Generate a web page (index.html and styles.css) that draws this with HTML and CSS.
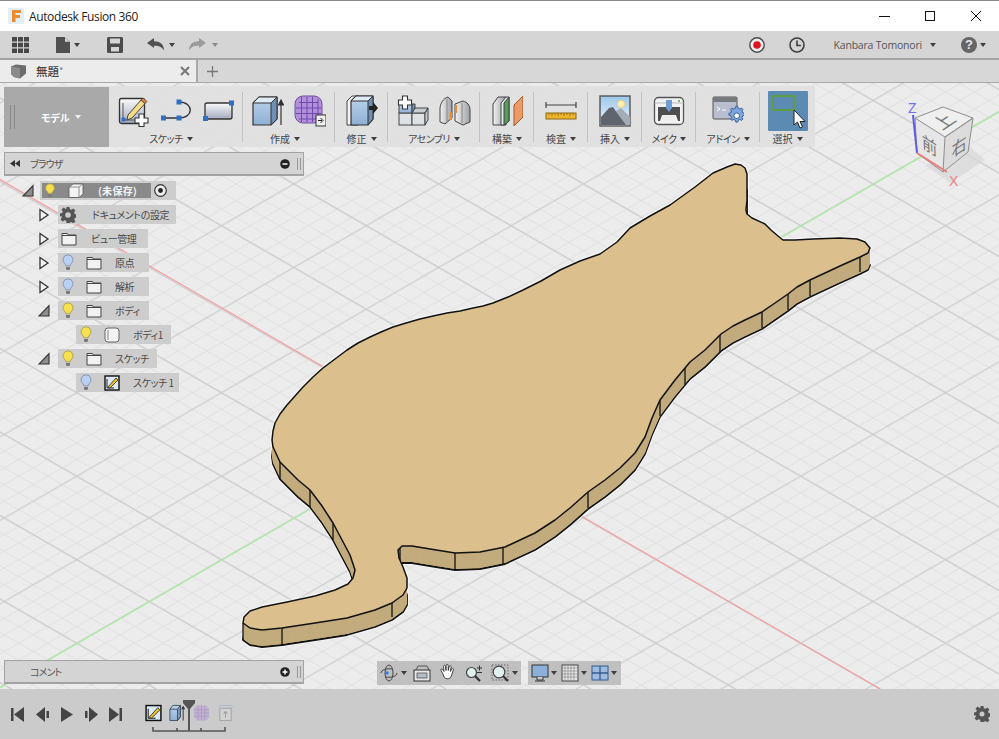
FILE: index.html
```html
<!DOCTYPE html>
<html lang="ja">
<head>
<meta charset="utf-8">
<title>Autodesk Fusion 360</title>
<link rel="stylesheet" href="styles.css">
</head>
<body>
<svg class="defs" aria-hidden="true">
  <defs>
    <linearGradient id="gBlue" x1="0" y1="0" x2="0" y2="1"><stop offset="0" stop-color="#bcd3ea"/><stop offset="1" stop-color="#8fb0d4"/></linearGradient>
    <linearGradient id="gSilver" x1="0" y1="0" x2="0" y2="1"><stop offset="0" stop-color="#fafafa"/><stop offset="1" stop-color="#a4abc0"/></linearGradient>
    <linearGradient id="gGrey" x1="0" y1="0" x2="1" y2="0"><stop offset="0" stop-color="#f2f2f2"/><stop offset="1" stop-color="#9c9fa6"/></linearGradient>
    <linearGradient id="gSky" x1="0" y1="0" x2="0" y2="1"><stop offset="0" stop-color="#9cc6ea"/><stop offset="1" stop-color="#eef6fb"/></linearGradient>
    <symbol id="bulbY" viewBox="0 0 12 17"><path d="M6 .8a5 5 0 0 1 3 9c-.6.5-.8 1.200-.8 2H3.800c0-.8-.2-1.500-.8-2a5 5 0 0 1 3-9z" fill="#f6e04e" stroke="#a89b58" stroke-width=".9"/><path d="M4 13h4v2.200L6.800 16H5.200L4 15.200z" fill="#777"/></symbol>
    <symbol id="bulbB" viewBox="0 0 12 17"><path d="M6 .8a5 5 0 0 1 3 9c-.6.5-.8 1.200-.8 2H3.800c0-.8-.2-1.500-.8-2a5 5 0 0 1 3-9z" fill="#b9d0f2" stroke="#7f8fae" stroke-width=".9"/><path d="M4 13h4v2.200L6.800 16H5.200L4 15.200z" fill="#777"/></symbol>
    <symbol id="folder" viewBox="0 0 16 14"><path d="M1 1.500h5.500l1 1.500H15v10H1z" fill="#f1f1f1" stroke="#444" stroke-width="1"/><path d="M1 3.500h14" stroke="#444" stroke-width="1"/></symbol>
    <symbol id="expC" viewBox="0 0 12 14"><path d="M2 1.500 10 7 2 12.500z" fill="#f2f2f2" stroke="#333" stroke-width="1.300"/></symbol>
    <symbol id="expO" viewBox="0 0 12 14"><path d="M11 1.500V12H1z" fill="#8e8e8e" stroke="#333" stroke-width="1.100"/></symbol>
    <symbol id="sk" viewBox="0 0 16 16"><rect x="1" y="1" width="14" height="14" fill="#dceaf6" stroke="#111" stroke-width="1.400"/><path d="M3 4V13H10" stroke="#222" stroke-width="1" fill="none"/><path d="M4 12 12 3l2 2-8 8z" fill="#f3c522" stroke="#222" stroke-width=".8"/></symbol>
  </defs>
</svg>

<div class="app">
  <header class="titlebar">
    <svg class="logo" viewBox="0 0 16 16"><rect width="16" height="16" fill="#e3eef6"/><path d="M4 2h9v3H7.500v2H12v3H7.500v4H4z" fill="#ee8b2d"/></svg>
    <span class="title">Autodesk Fusion 360</span>
    <div class="winctl">
      <svg viewBox="0 0 12 12"><path d="M1 6.500h11" stroke="#111" stroke-width="1"/></svg>
      <svg viewBox="0 0 12 12"><rect x="1.500" y="1.500" width="9" height="9" fill="none" stroke="#111"/></svg>
      <svg viewBox="0 0 12 12"><path d="M1 1l10 10M11 1 1 11" stroke="#111" stroke-width="1"/></svg>
    </div>
  </header>

  <div class="toolbar">
    <svg class="tb grid9" viewBox="0 0 17 16"><path d="M0 0h5v4.500H0zM6 0h5v4.500H6zM12 0h5v4.500h-5zM0 5.700h5v4.500H0zM6 5.700h5v4.500H6zM12 5.700h5v4.500h-5zM0 11.500h5V16H0zM6 11.500h5V16H6zM12 11.500h5V16h-5z" fill="#484848"/></svg>
    <svg class="tb doc" viewBox="0 0 14 16"><path d="M0 0h8.500L14 5v11H0z" fill="#505050"/><path d="M9 .5v4.300h4.500" fill="#d4d4d4"/></svg>
    <i class="caret c-doc"></i>
    <svg class="tb save" viewBox="0 0 16 16"><path d="M0 1.500A1.500 1.500 0 0 1 1.500 0h13A1.500 1.500 0 0 1 16 1.500v13a1.500 1.500 0 0 1-1.500 1.500h-13A1.500 1.500 0 0 1 0 14.500z" fill="#4c4c4c"/><rect x="3" y="1.500" width="10" height="5" fill="#d4d4d4"/><rect x="4" y="10" width="8" height="4.500" fill="#d4d4d4"/></svg>
    <svg class="tb undo" viewBox="0 0 17 13"><path d="M0 5 7 0v3.200c6 0 10 3 10 9.300-2-3.500-5-4.700-10-4.700V10z" fill="#505050"/></svg>
    <i class="caret c-undo"></i>
    <svg class="tb redo" viewBox="0 0 17 13"><path d="M17 5 10 0v3.200C4 3.200 0 6.200 0 12.500c2-3.500 5-4.700 10-4.700V10z" fill="#9b9b9b"/></svg>
    <i class="caret c-redo"></i>
    <div class="tb-right">
      <svg class="tb rec" viewBox="0 0 16 16"><circle cx="8" cy="8" r="7.200" fill="#eee" stroke="#4a4a4a" stroke-width="1.400"/><circle cx="8" cy="8" r="3.800" fill="#e01523"/></svg>
      <svg class="tb clock" viewBox="0 0 16 16"><circle cx="8" cy="8" r="7" fill="none" stroke="#3d3d3d" stroke-width="1.600"/><path d="M8 3.500V8.500H12" fill="none" stroke="#3d3d3d" stroke-width="1.600"/></svg>
      <span class="user">Kanbara Tomonori</span>
      <i class="caret c-user"></i>
      <span class="help">?</span>
      <i class="caret c-help"></i>
    </div>
  </div>

  <div class="tabbar">
    <div class="tab">
      <svg class="tabcube" viewBox="0 0 17 15"><path d="M1 2.500 6 .5l10 1v8l-6 5-6-1.500L1 10z" fill="#6c6c6c"/><path d="M1 2.500 10 4v10.500L4 13 1 10z" fill="#8b8b8b"/></svg>
      <span class="tabname">無題<em>*</em></span>
      <svg class="tabx" viewBox="0 0 10 10"><path d="M1 1l8 8M9 1 1 9" stroke="#7b7b7b" stroke-width="2.200"/></svg>
    </div>
    <svg class="tabplus" viewBox="0 0 11 11"><path d="M5.500 0v11M0 5.500h11" stroke="#777" stroke-width="1.300"/></svg>
  </div>

  <main class="canvas">
    <svg class="scene" viewBox="0 83 999 606" preserveAspectRatio="none">
      <defs>
        <pattern id="floor" width="100" height="100" patternUnits="userSpaceOnUse" patternTransform="matrix(.724 .4175 .724 -.4175 800.700 392.700)">
          <rect width="100" height="100" fill="#ececec"/>
          <path d="M20 0V100M40 0V100M60 0V100M80 0V100M0 20H100M0 40H100M0 60H100M0 80H100" stroke="#e0e0e0" stroke-width="1.200"/>
          <path d="M0 0V100M100 0V100M0 0H100M0 100H100" stroke="#cbcbcb" stroke-width="1.500"/>
        </pattern>
        <polygon id="cat" points="735,164 741,165 745,168 747,174 747,184 747,200 746,210 747,214 752,218 765,224 771,230 778,236 783,240 795,240 813,239 840,238 857,239 865,242 870,248 868,253 860,257 840,266 810,280 797,287 788,294 775,303 762,312 745,320 733,326 721,334 705,350 690,362 675,380 660,400 652,418 645,437 635,453 620,468 605,480 588,492 570,508 555,520 535,533 505,547 480,552 455,553 430,549 412,546 402,546 398,550 399,558 403,567 407,578 407,588 403,595 392,603 375,610 347,618 315,623 282,628 262,630 250,628 243,623 244,617 250,611 262,607 287,602 315,596 335,590 348,584 353,578 355,570 350,555 333,523 322,506 310,490 298,480 290,472 280,462 273,447 272,440 273,431 275,423 280,414 287,405 295,396 303,387 313,377 323,368 335,359 347,350 358,343 370,337 381,332 393,327 406,323 420,319 433,316 447,313 460,311 473,308 483,306 493,303 508,297 523,290 541,281 560,270 580,261 600,254 617,242 630,228 650,216 670,205 695,187 713,173 720,170 727,167"/>
      </defs>
      <rect x="0" y="83" width="999" height="606" fill="url(#floor)"/>
      <path d="M0 179.500 880 689" stroke="#f79a9a" stroke-width="1.100"/>
      <path d="M0 688 999 112" stroke="#a3ee9b" stroke-width="1.100"/>

      <use href="#cat" y="17" class="halo"/>
      <use href="#cat" class="halo"/>
      <use href="#cat" y="17" class="cat-bottom"/>
      <use href="#cat" y="16" class="cat-side"/><use href="#cat" y="15" class="cat-side"/><use href="#cat" y="14" class="cat-side"/><use href="#cat" y="13" class="cat-side"/><use href="#cat" y="12" class="cat-side"/><use href="#cat" y="11" class="cat-side"/><use href="#cat" y="10" class="cat-side"/><use href="#cat" y="9" class="cat-side"/><use href="#cat" y="8" class="cat-side"/><use href="#cat" y="7" class="cat-side"/><use href="#cat" y="6" class="cat-side"/><use href="#cat" y="5" class="cat-side"/><use href="#cat" y="4" class="cat-side"/><use href="#cat" y="3" class="cat-side"/><use href="#cat" y="2" class="cat-side"/><use href="#cat" y="1" class="cat-side"/>
      <path class="cat-edges" d="M280 462v17M310 490v17M333 523v17M355 570v11M400 547v14M455 553v17M503 547v18M282 628v18M392 603v14M243 623v17M588 492v16M660 400v16M685 368v17M720 334v18M762 312v16M788 294v16M810 280v16M860 257v15"/>
      <use href="#cat" class="cat-top"/>

      <g class="cube">
        <polygon points="925,165 950,183 985,160 968,145" fill="#d8d8d8" opacity=".7"/>
        <polygon points="915,118 943,107 973,118 945,137" fill="#efefef"/>
        <polygon points="915,118 945,137 943,172 917,153" fill="#e6e6e6"/>
        <polygon points="945,137 973,118 968,152 943,172" fill="#dcdcdc"/>
        <path d="M915 118 943 107 973 118 945 137ZM945 137 943 172 917 153 915 118M945 137 973 118 968 152 943 172" fill="none" stroke="#8f8f8f" stroke-width="1"/>
        <path d="M913 115 917 153" stroke="#5c5ce6" stroke-width="2"/>
        <path d="M917 153 947 172" stroke="#ea7c7c" stroke-width="2"/>
        <text x="908" y="113" class="axis az">Z</text>
        <text x="949" y="186" class="axis ax">X</text>
        <text class="cube-t" transform="matrix(.96 -.65 1.03 .65 949.700 125.600)">上</text>
        <text class="cube-t" transform="matrix(.95 .6 .05 1.100 929.800 152)">前</text>
        <text class="cube-t" transform="matrix(.95 -.63 0 1.100 959 153)">右</text>
      </g>
    </svg>

    <section class="ribbon">
      <div class="mode">
        <span class="grip"></span>
        <span class="mode-l">モデル</span>
        <i class="caret caret-w"></i>
      </div>

      <div class="group g-sketch">
        <div class="icons">
          <svg class="ic" viewBox="0 0 32 32"><rect x="1.500" y="3.500" width="25" height="25" rx="2" fill="url(#gSilver)" stroke="#333" stroke-width="1.300"/><path d="M5 8v17h17" fill="none" stroke="#555"/><rect x="3.500" y="22.500" width="4" height="4" fill="#2f6fc5"/><path d="M10 20 23 5l4 3.500L14 23l-5 2z" fill="#f5dc86" stroke="#444" stroke-width="1"/><path d="M23 5l2-2 4 3.500-2 2z" fill="#e8853c" stroke="#444" stroke-width=".8"/><path d="M21 19h5v4h4v5h-4v3.500h-5V28h-4v-5h4z" fill="#fff" stroke="#333" stroke-width="1.100"/></svg>
          <svg class="ic" viewBox="0 0 32 32"><path d="M3 23H19C34 23 34 7 19 7" fill="none" stroke="#333" stroke-width="1.400"/><rect x="1" y="20.500" width="5" height="5" fill="#2f6fc5"/><rect x="16.500" y="20.500" width="5" height="5" fill="#2f6fc5"/><rect x="16.500" y="4.500" width="5" height="5" fill="#2f6fc5"/></svg>
          <svg class="ic" viewBox="0 0 32 32"><rect x="3" y="8" width="27" height="16" rx="2" fill="url(#gSilver)" stroke="#333" stroke-width="1.300"/><rect x="27" y="5.500" width="5" height="5" fill="#2f6fc5"/><rect x="1" y="21" width="5" height="5" fill="#2f6fc5"/></svg>
        </div>
        <div class="glabel"><span class="kn">スケッチ</span><i class="caret"></i></div>
      </div>

      <div class="group g-create">
        <div class="icons">
          <svg class="ic" viewBox="0 0 32 32"><path d="M1 8 7 2h18v22l-6 6H1z" fill="url(#gBlue)" stroke="#333" stroke-width="1.200"/><path d="M1 8 7 2h18l-6 6z" fill="#dfeaf5" stroke="#333"/><path d="M19 8v22l6-6V2z" fill="#6f8fb5" stroke="#333"/><path d="M29 30V7M26.500 10 29 5l2.500 5z" fill="#333" stroke="#333" stroke-width="1.200"/></svg>
          <svg class="ic" viewBox="0 0 32 32"><rect x="1" y="1" width="27" height="27" rx="8" fill="#b48fdc" stroke="#6d5199" stroke-width="1"/><path d="M5 7.500H24M2 13H27M2 18.500H27M5 24H24M7.500 2V27M13 2V27M18.500 2V27M24 4V26" stroke="#6d4bab" stroke-width="1"/><rect x="22" y="20" width="10" height="11" fill="#eee" stroke="#333"/><path d="M24 25.500h4M26.500 23l2.500 2.500-2.500 2.500" stroke="#222" fill="none"/></svg>
        </div>
        <div class="glabel"><span>作成</span><i class="caret"></i></div>
      </div>

      <div class="group g-modify">
        <div class="icons">
          <svg class="ic" viewBox="0 0 32 32"><path d="M1 6 6 1h6v29H1z" fill="#f4f4f4" stroke="#444"/><path d="M5 6 10 1h17v23l-5 6H5z" fill="url(#gBlue)" stroke="#333" stroke-width="1.200"/><path d="M5 6 10 1h17l-5 5z" fill="#dfeaf5" stroke="#333"/><path d="M22 6v24l5-6V1z" fill="#6f8fb5" stroke="#333"/><path d="M23 11h4V7l5 6-5 6v-4h-4z" fill="#222"/></svg>
        </div>
        <div class="glabel"><span>修正</span><i class="caret"></i></div>
      </div>

      <div class="group g-assembly">
        <div class="icons">
          <svg class="ic" viewBox="0 0 32 32"><rect x="2" y="18" width="13" height="12" fill="#dfe2e5" stroke="#444"/><rect x="15" y="18" width="13" height="12" fill="#dfe2e5" stroke="#444"/><path d="M15 18l3-5h13l-3 5zM28 18l3-5v12l-3 5z" fill="#c9ccd0" stroke="#444"/><path d="M2 9h13v9H2z" fill="url(#gBlue)" stroke="#444"/><path d="M15 9h3v4l-3 5z" fill="#6f8fb5" stroke="#444"/><path d="M5.500 1h5v4h4v5h-4v4h-5v-4h-4V5h4z" fill="#fff" stroke="#333" stroke-width="1.100"/></svg>
          <svg class="ic" viewBox="0 0 32 32"><path d="M1 27V14C1 8 5 3 9 2l4 4v17l-7 6z" fill="url(#gGrey)" stroke="#444"/><path d="M31 27V15c0-5-3-8-7-9l-8 3v17l8 4z" fill="url(#gGrey)" stroke="#444"/><path d="M8 4v23M23 8v20" stroke="#888"/><path d="M12 17v8M17 10v8" stroke="#ee8a2e" stroke-width="2"/></svg>
        </div>
        <div class="glabel"><span class="kn">アセンブリ</span><i class="caret"></i></div>
      </div>

      <div class="group g-construct">
        <div class="icons">
          <svg class="ic" viewBox="0 0 32 32"><path d="M2 9 7 2h8v28H2z" fill="url(#gGrey)" stroke="#444"/><path d="M10 8l5-6h3v24l-5 4h-3z" fill="#e9e9e9" stroke="#444"/><path d="M13 8l5-6v24l-5 4z" fill="#5f9a52" stroke="#345"/><path d="M23 10 32 1v21l-9 9z" fill="#ec9a66" stroke="#a3542a"/></svg>
        </div>
        <div class="glabel"><span>構築</span><i class="caret"></i></div>
      </div>

      <div class="group g-inspect">
        <div class="icons">
          <svg class="ic" viewBox="0 0 32 32"><path d="M1 7V13M31 7V13M1 10H31" stroke="#444" stroke-width="1.200" fill="none"/><rect x="1" y="18" width="30" height="6" fill="#eeb52c" stroke="#8a6a14"/><path d="M4 18v2M7 18v3M10 18v2M13 18v3M16 18v2M19 18v3M22 18v2M25 18v3M28 18v2" stroke="#8a6a14" stroke-width=".8"/></svg>
        </div>
        <div class="glabel"><span>検査</span><i class="caret"></i></div>
      </div>

      <div class="group g-insert">
        <div class="icons">
          <svg class="ic" viewBox="0 0 32 32"><rect x="1" y="1" width="30" height="30" fill="url(#gSky)" stroke="#555" stroke-width="1.400"/><circle cx="22" cy="9" r="3.500" fill="#fdf0b4" stroke="#f3d877"/><path d="M17 16l5-3 9 9v8H20z" fill="#a4acb5"/><path d="M2 30V22L10 13l4-1 4 6 9 12z" fill="#5f646e"/></svg>
        </div>
        <div class="glabel"><span>挿入</span><i class="caret"></i></div>
      </div>

      <div class="group g-make">
        <div class="icons">
          <svg class="ic" viewBox="0 0 32 32"><rect x="1.500" y="2.500" width="29" height="27" rx="4" fill="#f2f2f2" stroke="#555" stroke-width="1.300"/><path d="M1.500 8h29" stroke="#bbb"/><path d="M5 12h22v14H5z" fill="#4e4e4e"/><path d="M13 5h6v8l-3 4-3-4z" fill="#6f9ed4"/><path d="M7 26l2-6h14l2 6z" fill="#eee"/><circle cx="26" cy="6" r="1" fill="#46a846"/></svg>
        </div>
        <div class="glabel"><span class="kn">メイク</span><i class="caret"></i></div>
      </div>

      <div class="group g-addin">
        <div class="icons">
          <svg class="ic" viewBox="0 0 32 32"><rect x="1" y="2" width="24" height="22" rx="1" fill="#b8bed0" stroke="#555"/><rect x="1" y="2" width="24" height="5" fill="#77797f"/><path d="M5 12l3 2-3 2M10 15h4" fill="none" stroke="#fff"/><path d="M24 13l2 0 .6 2 1.800.8 1.700-1 1.400 1.400-1 1.700.8 1.800 2 .6v2l-2 .6-.8 1.800 1 1.700-1.400 1.400-1.700-1-1.800.8-.6 2h-2l-.6-2-1.800-.8-1.700 1-1.400-1.400 1-1.700-.8-1.800-2-.6v-2l2-.6.8-1.800-1-1.700 1.400-1.400 1.700 1 1.800-.8z" transform="translate(1 -1) scale(.95)" fill="#7ca4df" stroke="#3e5f95"/><circle cx="24.700" cy="20.700" r="2.800" fill="#fff" stroke="#3e5f95"/></svg>
        </div>
        <div class="glabel"><span class="kn">アドイン</span><i class="caret"></i></div>
      </div>

      <div class="group g-select">
        <div class="sel-btn">
          <svg class="sel-ic" viewBox="0 0 40 40"><rect x="5" y="5" width="21" height="14" fill="none" stroke="#5fa21f" stroke-width="1.500"/><path d="M26 19v15l3.500-3 2.500 6 2.500-1-2.500-5.500h5z" fill="#fff" stroke="#222"/></svg>
        </div>
        <div class="glabel"><span>選択</span><i class="caret"></i></div>
      </div>
    </section>

    <section class="browser">
      <div class="phead">
        <svg class="rew" viewBox="0 0 10 7"><path d="M5 0v7L0 3.500zM10 0v7L5 3.500z" fill="#333"/></svg>
        <span class="ptitle kn2">ブラウザ</span>
        <svg class="round" viewBox="0 0 10 10"><circle cx="5" cy="5" r="4.800" fill="#222"/><path d="M2.500 5h5" stroke="#fff" stroke-width="1.500"/></svg>
        <span class="pgrip"></span>
      </div>
      <div class="tree">
        <div class="row d0">
          <svg class="exp exp-root"><use href="#expO"/></svg>
          <div class="chip w-root">
            <div class="root-inner">
              <svg class="bulb"><use href="#bulbY"/></svg>
              <svg class="nicon" viewBox="0 0 16 15"><path d="M1 4 5 1h10v10l-4 3.500H1z" fill="#f3f3f3" stroke="#555" stroke-width=".8"/><path d="M1 4h10v10.500M11 4l4-3" fill="none" stroke="#777" stroke-width=".8"/></svg>
              <span class="root-l">(未保存)</span>
            </div>
            <svg class="radio" viewBox="0 0 13 13"><circle cx="6.500" cy="6.500" r="5.800" fill="#eee" stroke="#333" stroke-width="1.200"/><circle cx="6.500" cy="6.500" r="2.400" fill="#222"/></svg>
          </div>
        </div>
        <div class="row d1">
          <svg class="exp"><use href="#expC"/></svg>
          <div class="chip w-doc">
            <svg class="gear" viewBox="0 0 16 16"><path d="M6.500 0h3l.4 2.200 1.500.6 1.900-1.300 2.100 2.100-1.300 1.900.6 1.500 2.300.5v3l-2.200.4-.6 1.500 1.300 1.900-2.100 2.100-1.900-1.300-1.500.6L9.500 16h-3l-.4-2.200-1.500-.6-1.900 1.300L.6 12.400l1.300-1.900-.6-1.500L0 9.500v-3l2.200-.4.600-1.500L1.500 2.700 3.600.600l1.900 1.300 1-.3z" fill="#555"/><circle cx="8" cy="8" r="2.800" fill="#ccc"/></svg>
            <span class="lbl l-doc">ドキュメントの設定</span>
          </div>
        </div>
        <div class="row d1">
          <svg class="exp"><use href="#expC"/></svg>
          <div class="chip w-view">
            <svg class="fold f-first"><use href="#folder"/></svg>
            <span class="lbl l-view">ビュー管理</span>
          </div>
        </div>
        <div class="row d1">
          <svg class="exp"><use href="#expC"/></svg>
          <div class="chip w-std">
            <svg class="bulb"><use href="#bulbB"/></svg>
            <svg class="fold"><use href="#folder"/></svg>
            <span class="lbl l-n">原点</span>
          </div>
        </div>
        <div class="row d1">
          <svg class="exp"><use href="#expC"/></svg>
          <div class="chip w-std">
            <svg class="bulb"><use href="#bulbB"/></svg>
            <svg class="fold"><use href="#folder"/></svg>
            <span class="lbl l-n">解析</span>
          </div>
        </div>
        <div class="row d1">
          <svg class="exp"><use href="#expO"/></svg>
          <div class="chip w-std">
            <svg class="bulb"><use href="#bulbY"/></svg>
            <svg class="fold"><use href="#folder"/></svg>
            <span class="lbl l-n">ボディ</span>
          </div>
        </div>
        <div class="row d2">
          <div class="chip w-b1">
            <svg class="bulb"><use href="#bulbY"/></svg>
            <svg class="fold fold-tall" viewBox="0 0 16 16"><rect x="1" y="1" width="14" height="14" rx="3" fill="#f4f4f4" stroke="#666"/><rect x="3" y="3" width="2" height="10" fill="#bbb"/></svg>
            <span class="lbl l-n">ボディ1</span>
          </div>
        </div>
        <div class="row d1">
          <svg class="exp"><use href="#expO"/></svg>
          <div class="chip w-sk">
            <svg class="bulb"><use href="#bulbY"/></svg>
            <svg class="fold"><use href="#folder"/></svg>
            <span class="lbl l-n">スケッチ</span>
          </div>
        </div>
        <div class="row d2">
          <div class="chip w-s1">
            <svg class="bulb"><use href="#bulbB"/></svg>
            <svg class="fold fold-tall"><use href="#sk"/></svg>
            <span class="lbl l-n">スケッチ 1</span>
          </div>
        </div>
      </div>
    </section>

    <section class="phead comment">
      <span class="ptitle ptitle-c kn2">コメント</span>
      <svg class="round" viewBox="0 0 10 10"><circle cx="5" cy="5" r="4.800" fill="#222"/><path d="M2.500 5h5M5 2.500v5" stroke="#fff" stroke-width="1.500"/></svg>
      <span class="pgrip"></span>
    </section>

    <nav class="navbar">
      <div class="navgroup ng1">
        <svg class="nv" viewBox="0 0 18 18"><ellipse cx="9" cy="9" rx="4" ry="8" fill="none" stroke="#444"/><path d="M1 9c0-3 6-5 11-4M17 9c0 3-5 5-11 4" fill="none" stroke="#444"/><circle cx="7" cy="9" r="1.700" fill="#2f7fe0"/></svg>
        <i class="caret"></i>
        <svg class="nv n-film" viewBox="0 0 18 18"><rect x="1" y="6" width="16" height="11" fill="#e6e6e6" stroke="#333"/><rect x="4" y="9" width="10" height="5" fill="#b5bcc6" stroke="#444" stroke-width=".7"/><path d="M3 6 5 2h9l2 4" fill="none" stroke="#555"/></svg>
        <svg class="nv n-hand" viewBox="0 0 18 18"><path d="M4 10 2 6.500c-.6-1.500 1-2 1.800-.8L5 7.500l-.5-5c0-1.500 2-1.500 2 0l.5 4 .2-5c0-1.500 2-1.500 2 0l.1 5 .9-4c.3-1.400 2.100-1 1.900.3l-.7 4.700 1.300-2.500c.7-1.200 2.200-.5 1.700.8l-2 6c-.8 2-2 3-4 3-3 0-3.400-1.800-4.400-4.800z" fill="#fff" stroke="#333" stroke-width=".9"/></svg>
        <svg class="nv n-zoom" viewBox="0 0 18 18"><circle cx="6.500" cy="8.500" r="5" fill="#dff0ef" stroke="#444" stroke-width="1.200"/><path d="M10 12l5 5" stroke="#333" stroke-width="2.200"/><path d="M12 4h5M14.500 1.500v5M12 8.500h5" stroke="#333"/></svg>
        <svg class="nv n-fit" viewBox="0 0 18 18"><path d="M1 1h16v15H1z" fill="none" stroke="#666" stroke-dasharray="1.500 1.500"/><circle cx="8" cy="8" r="5.800" fill="#dff0ef" stroke="#444" stroke-width="1.200"/><path d="M12 12l5 5" stroke="#333" stroke-width="2.200"/></svg>
        <i class="caret"></i>
      </div>
      <div class="navgroup ng2">
        <svg class="nv" viewBox="0 0 18 18"><rect x="1" y="1" width="16" height="12" fill="#8db0d8" stroke="#333"/><path d="M6 13v3h6v-3M4 17h10" stroke="#333" fill="#ccc"/></svg>
        <i class="caret"></i>
        <svg class="nv" viewBox="0 0 18 18"><rect x="1" y="1" width="16" height="16" fill="#e8e8e8" stroke="#444"/><path d="M4 1v16M7 1v16M10 1v16M13 1v16M1 4h16M1 7h16M1 10h16M1 13h16" stroke="#888" stroke-width=".7"/></svg>
        <i class="caret"></i>
        <svg class="nv" viewBox="0 0 18 18"><rect x="1" y="2" width="16" height="14" fill="#9ebce0" stroke="#345a90"/><path d="M9 2v14M1 9h16" stroke="#345a90" stroke-width="1.300"/></svg>
        <i class="caret"></i>
      </div>
    </nav>
  </main>

  <footer class="timeline">
    <div class="tl-controls">
      <svg class="tc" viewBox="0 0 13 15"><path d="M0 1h2.500v13H0zM13 0v15L3 7.500z" fill="#444"/></svg>
      <svg class="tc" viewBox="0 0 13 15"><path d="M9 0v15L0 7.500zM10.500 4H13v7h-2.500z" fill="#444"/></svg>
      <svg class="tc" viewBox="0 0 13 15"><path d="M1 0 13 7.500 1 15z" fill="#444"/></svg>
      <svg class="tc" viewBox="0 0 13 15"><path d="M4 0v15l9-7.500zM0 4h2.500v7H0z" fill="#444"/></svg>
      <svg class="tc" viewBox="0 0 13 15"><path d="M0 0v15l10-7.500zM10.500 1H13v13h-2.500z" fill="#444"/></svg>
    </div>
    <div class="tl-track">
      <svg class="tl-ic"><use href="#sk"/></svg>
      <svg class="tl-ic" viewBox="0 0 18 18"><path d="M1 5 4 1h8v12l-3 4H1z" fill="url(#gBlue)" stroke="#345" stroke-width=".9"/><path d="M9 5v12l3-4V1zM1 5h8" fill="#7f9dc2" stroke="#345" stroke-width=".9"/><path d="M15 17V3M13.500 5 15 2l1.500 3" fill="#333" stroke="#333"/></svg>
      <svg class="tl-ic dim" viewBox="0 0 18 18"><rect x="1" y="1" width="16" height="16" rx="5" fill="#b48fdc"/><path d="M1 5.500H17M1 9H17M1 12.500H17M5.500 1V17M9 1V17M12.500 1V17" stroke="#6d4bab" stroke-width=".7"/></svg>
      <svg class="tl-ic dim" viewBox="0 0 18 18"><rect x="3" y="4" width="12" height="13" fill="#ddd" stroke="#667"/><path d="M1 3 3 1h12l2 2" fill="none" stroke="#7aa2d0"/><path d="M9 14V8M7 10l2-3 2 3" fill="none" stroke="#555"/></svg>
      <svg class="tl-marker" viewBox="0 0 76 34"><path d="M2 27v4H74v-4M26 28v3M50 28v3" fill="none" stroke="#555" stroke-width="1.600"/><path d="M32 0h12v3l-5 6v22h-2V9l-5-6z" fill="#555"/></svg>
    </div>
    <svg class="tl-gear" viewBox="0 0 16 16"><path d="M6.500 0h3l.4 2.200 1.500.6 1.900-1.300 2.100 2.100-1.300 1.900.6 1.500 2.300.5v3l-2.200.4-.6 1.500 1.300 1.900-2.100 2.100-1.900-1.300-1.500.6L9.500 16h-3l-.4-2.200-1.500-.6-1.900 1.300L.6 12.400l1.300-1.900-.6-1.500L0 9.500v-3l2.200-.4.600-1.500L1.500 2.700 3.600.600l1.900 1.300 1-.3z" fill="#555"/><circle cx="8" cy="8" r="2.500" fill="#cbcbcb"/></svg>
  </footer>
</div>
</body>
</html>
```

FILE: styles.css
```css
* { box-sizing: border-box; }
html, body { margin: 0; padding: 0; height: 100%; }
body {
  width: 999px;
  height: 739px;
  overflow: hidden;
  font-family: "Noto Sans CJK JP", "Noto Sans", sans-serif;
  font-size: 10px;
  font-feature-settings: "palt";
  color: #444;
}
svg { display: block; flex: none; }
.defs { position: absolute; width: 0; height: 0; }
.app { display: flex; flex-direction: column; height: 739px; }

.caret {
  display: block;
  flex: none;
  width: 0;
  height: 0;
  border-left: 3.5px solid transparent;
  border-right: 3.5px solid transparent;
  border-top: 4px solid #3f3f3f;
}

/* title bar */
.titlebar {
  height: 31px;
  flex: none;
  background: #fff;
  border-top: 1px solid #8a8a8a;
  display: flex;
  align-items: center;
  padding-left: 8px;
}
.logo { width: 16px; height: 16px; }
.title {
  margin-left: 5px;
  font-family: "Open Sans", sans-serif;
  font-size: 12px;
  letter-spacing: -.38px;
  color: #222;
}
.winctl { margin-left: auto; margin-right: 17px; display: flex; gap: 34px; }
.winctl svg { width: 12px; height: 12px; }

/* toolbar */
.toolbar {
  height: 29px;
  flex: none;
  background: #d5d5d5;
  border-bottom: 2px solid #a3a3a3;
  display: flex;
  align-items: center;
  padding-left: 12px;
}
.grid9 { width: 17px; height: 16px; }
.doc { width: 14px; height: 16px; margin-left: 27px; }
.c-doc { margin-left: 4px; }
.save { width: 16px; height: 16px; margin-left: 27px; }
.undo { width: 17px; height: 13px; margin-left: 24px; }
.c-undo { margin-left: 5px; }
.redo { width: 17px; height: 13px; margin-left: 14px; }
.c-redo { margin-left: 6px; border-top-color: #8a8a8a; }
.tb-right { margin-left: auto; display: flex; align-items: center; padding-right: 13px; }
.rec, .clock { width: 16px; height: 16px; }
.clock { margin-left: 24px; }
.user {
  margin-left: 29px;
  font-family: "Open Sans", sans-serif;
  font-size: 10.500px;
  letter-spacing: -.2px;
  color: #555;
}
.c-user { margin-left: 8px; }
.help {
  margin-left: 25px;
  width: 16px;
  height: 16px;
  border-radius: 50%;
  background: #666;
  color: #e6e6e6;
  font: bold 13px/16px "Liberation Sans", sans-serif;
  text-align: center;
}
.c-help { margin-left: 3px; }

/* tabs */
.tabbar {
  height: 23px;
  flex: none;
  background: #d7d7d7;
  border-bottom: 1px solid #a9a9a9;
  display: flex;
  align-items: center;
}
.tab {
  width: 198px;
  height: 22px;
  background: #ececec;
  border-right: 2px solid #a9a9a9;
  display: flex;
  align-items: center;
  padding-left: 10px;
}
.tabcube { width: 17px; height: 15px; }
.tabname { margin-left: 9px; font-size: 11.500px; font-weight: 500; color: #444; line-height: 14px; }
.tabname em { font-style: normal; font-size: 9px; color: #7b8aa8; vertical-align: 2px; }
.tabx { width: 10px; height: 10px; margin-left: auto; margin-right: 6px; }
.tabplus { width: 11px; height: 11px; margin-left: 9px; }

/* canvas */
.canvas { position: relative; flex: 1; min-height: 0; overflow: hidden; background: #ececec; }
.scene { position: absolute; left: 0; top: 0; width: 999px; height: 606px; }
.halo { fill: none; stroke: #fff; stroke-width: 4; stroke-linejoin: round; opacity: .5; }
.cat-bottom { fill: #c2ab7d; stroke: #111; stroke-width: 1.800; stroke-linejoin: round; }
.cat-side { fill: #c2ab7d; }
.cat-edges { stroke: #111; stroke-width: 1.300; fill: none; }
.cat-top { fill: #dbbf8d; stroke: #111; stroke-width: 1.500; stroke-linejoin: round; }
.axis { font: 14px "Liberation Sans", sans-serif; }
.az { fill: #6e6ef0; }
.ax { fill: #ee8080; }
.cube-t { font: 16px "Noto Sans CJK JP", sans-serif; fill: #777; text-anchor: middle; }

/* ribbon */
.ribbon {
  position: absolute;
  left: 4px;
  top: 3px;
  width: 811px;
  height: 61px;
  background: rgba(224, 224, 224, .96);
  display: flex;
}
.mode {
  width: 105px;
  height: 60px;
  margin-top: 1px;
  background: #a9a9a9;
  display: flex;
  align-items: center;
  position: relative;
  padding-left: 6px;
}
.grip { width: 5px; height: 24px; border-left: 1px solid #8a8a8a; border-right: 1px solid #8a8a8a; }
.mode-l { margin-left: 26px; color: #fff; font-weight: 700; font-size: 10px; }
.caret-w { margin-left: 5px; border-top-color: #f0f0f0; }

.group { display: flex; flex-direction: column; align-items: center; position: relative; padding-top: 9px; }
.group::after {
  content: "";
  position: absolute;
  right: 0;
  top: 6px;
  bottom: 5px;
  width: 1px;
  background: #c2c2c2;
}
.g-select::after { display: none; }
.g-sketch { width: 134px; }
.g-create { width: 92px; }
.g-modify { width: 53px; }
.g-assembly { width: 92px; }
.g-construct { width: 54px; }
.g-inspect { width: 54px; }
.g-insert { width: 54px; }
.g-make { width: 54px; }
.g-addin { width: 64px; }
.g-select { width: 55px; padding-top: 5px; }
.icons { display: flex; gap: 10px; height: 32px; }
.ic { width: 32px; height: 32px; }
.glabel {
  margin-top: 4px;
  height: 15px;
  display: flex;
  align-items: center;
  gap: 4px;
  line-height: 15px;
  font-size: 10px;
  color: #444;
}
.kn { letter-spacing: -.45px; }
.kn2 { letter-spacing: -.9px; }
.g-sketch .glabel { margin-right: 10px; }
.g-create .glabel { margin-right: 8px; }
.sel-btn { width: 40px; height: 40px; background: #5b8ab3; border-radius: 1px; }
.sel-ic { width: 40px; height: 40px; }
.g-select .glabel { margin-top: 0; }

/* browser */
.browser { position: absolute; left: 4px; top: 69px; width: 300px; }
.phead {
  height: 24px;
  background: #d4d4d4;
  border: 1px solid #a3a3a3;
  border-bottom-width: 2px;
  display: flex;
  align-items: center;
  padding-left: 5px;
}
.rew { width: 10px; height: 7px; }
.ptitle { margin-left: 10px; color: #555; font-size: 10px; }
.ptitle-c { margin-left: 20px; }
.round { width: 10px; height: 10px; margin-left: auto; }
.pgrip { width: 4px; height: 12px; margin: 0 2px 0 7px; border-left: 1px solid #999; border-right: 1px solid #999; }
.tree { margin-top: 5px; display: flex; flex-direction: column; gap: 5px; }
.row { display: flex; align-items: center; height: 19px; }
.d0 { margin-left: 16px; }
.d1 { margin-left: 34px; }
.d2 { margin-left: 72px; }
.exp { width: 12px; height: 14px; margin-right: 8px; }
.exp-root { width: 16px; margin-right: 4px; }
.chip { height: 19px; background: #cdcdcd; display: flex; align-items: center; }
.w-root { width: 136px; padding-left: 2px; }
.w-doc { width: 118px; }
.w-view { width: 90px; }
.w-std { width: 91px; }
.w-b1 { width: 95px; }
.w-sk { width: 99px; }
.w-s1 { width: 103px; }
.root-inner { width: 109px; height: 15px; background: #8a8a8a; display: flex; align-items: center; }
.radio { width: 13px; height: 13px; margin-left: 3px; }
.bulb { width: 12px; height: 17px; margin-left: 4px; margin-right: 12px; }
.root-inner .bulb { margin-left: 2px; margin-right: 12px; height: 15px; }
.nicon { width: 16px; height: 15px; }
.root-l { margin-left: 14px; color: #f4f4f4; font-weight: 700; font-size: 10px; line-height: 15px; letter-spacing: .3px; }
.gear { width: 16px; height: 16px; margin-left: 2px; }
.fold { width: 16px; height: 14px; }
.fold-tall { height: 16px; }
.f-first { margin-left: 3px; }
.lbl { line-height: 19px; font-size: 10px; color: #4a4a4a; white-space: nowrap; letter-spacing: -.4px; }
.l-doc { margin-left: 16px; }
.l-view { margin-left: 14px; }
.l-n { margin-left: 13px; }

/* comment */
.comment { position: absolute; left: 4px; bottom: 5px; width: 300px; }

/* nav */
.navbar { position: absolute; left: 377px; top: 578px; display: flex; gap: 7px; }
.navgroup { height: 24px; background: #c0c0c0; display: flex; align-items: center; }
.ng1 { width: 144px; padding-left: 3px; }
.ng2 { width: 93px; padding-left: 3px; }
.nv { width: 18px; height: 18px; }
.navgroup .caret { margin-left: 3px; margin-right: 3px; }
.ng2 .caret { margin-left: 2px; margin-right: 4px; }
.n-film { margin-left: 3px; }
.n-hand { margin-left: 8px; }
.n-zoom { margin-left: 8px; }
.n-fit { margin-left: 8px; }

/* timeline */
.timeline {
  height: 50px;
  flex: none;
  background: #cbcbcb;
  display: flex;
  align-items: center;
  padding-left: 11px;
  padding-right: 9px;
}
.tl-controls { display: flex; gap: 11.500px; }
.tc { width: 13px; height: 15px; }
.tl-track { position: relative; margin-left: 23px; display: flex; gap: 7px; height: 18px; margin-top: -2px; }
.tl-ic { width: 17px; height: 18px; position: relative; z-index: 1; }
.dim { opacity: .4; }
.tl-marker { position: absolute; left: 6px; top: -4px; width: 76px; height: 34px; }
.tl-gear { width: 16px; height: 16px; margin-left: auto; }
```
